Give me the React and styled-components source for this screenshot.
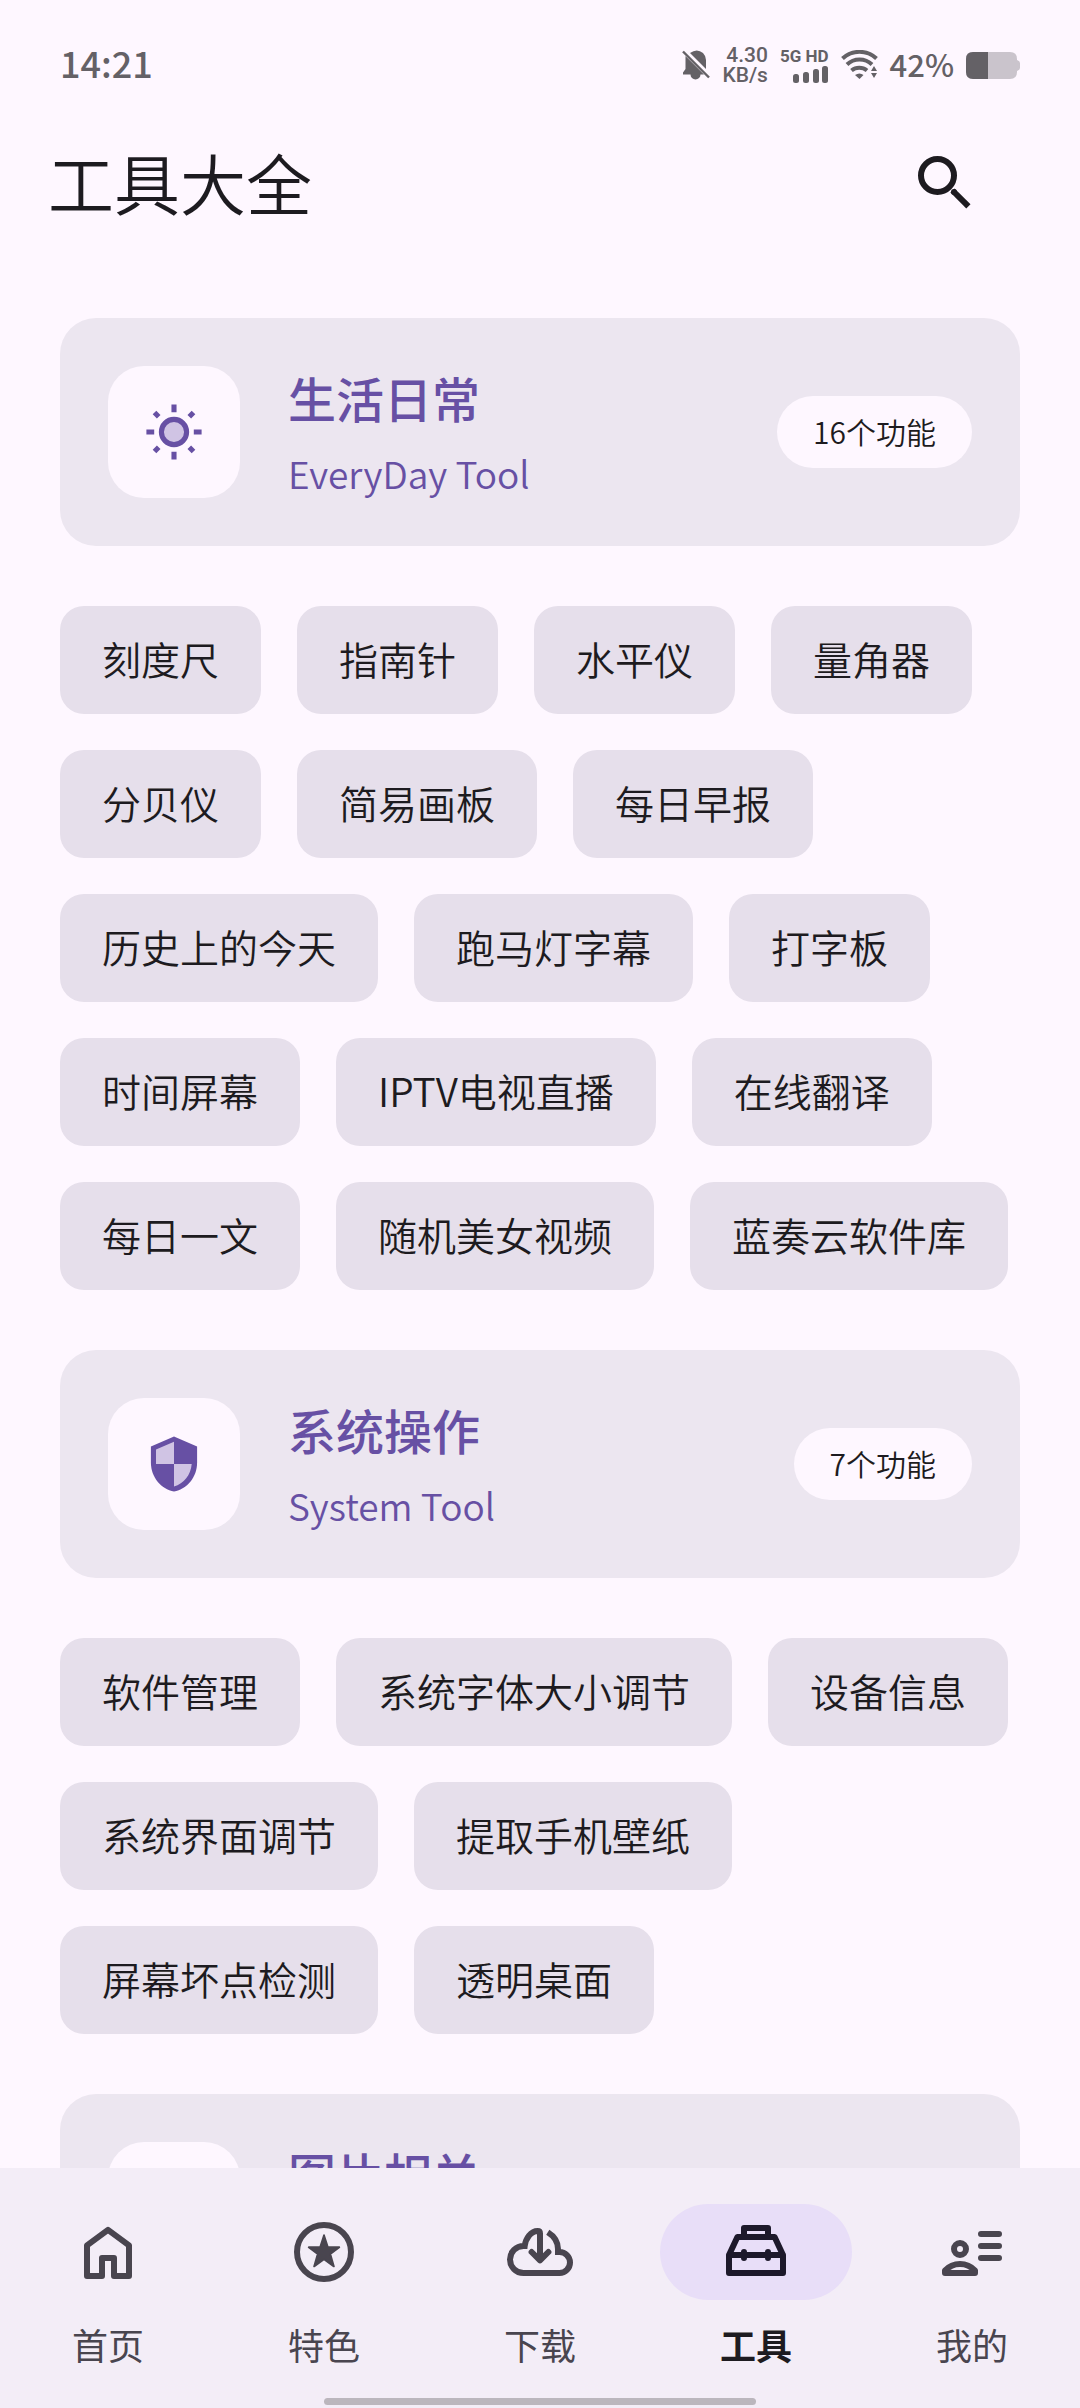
import React from 'react';
import styled, { createGlobalStyle } from 'styled-components';

const GlobalStyle = createGlobalStyle`
  * {
    box-sizing: border-box;
  }
  html, body, #root {
    height: 100%;
    margin: 0;
  }
  body {
    background: #fef7ff;
    color: #1d1b20;
    font-family: 'Noto Sans CJK SC', sans-serif;
    font-weight: 350;
  }
  button {
    border: 0;
    padding: 0;
    background: none;
    color: inherit;
    font: inherit;
  }
`;

const Screen = styled.div`
  display: flex;
  flex-direction: column;
  height: 100vh;
  overflow: hidden;
`;

const StatusBar = styled.div`
  display: flex;
  flex: none;
  align-items: center;
  height: 130px;
  padding: 0 60px;
  color: #646166;
  font-weight: 500;
  line-height: 1;
`;

const Clock = styled.time`
  flex: 1;
  padding-bottom: 6px;
  font-size: 36px;
`;

const StatusIcons = styled.div`
  display: flex;
  align-items: center;
  gap: 12px;
`;

const NetSpeed = styled.div`
  display: flex;
  flex-direction: column;
  align-items: flex-end;
  font-family: Roboto, sans-serif;
  font-size: 21px;
  line-height: 20px;
`;

const Signal = styled.div`
  display: flex;
  flex-direction: column;
  align-items: flex-end;
  gap: 2px;
  font-family: Roboto, sans-serif;
  font-size: 17px;
  font-weight: 700;
  line-height: 16px;
`;

const Percent = styled.span`
  padding-bottom: 4px;
  font-size: 31px;
`;

const AppBar = styled.header`
  display: flex;
  flex: none;
  align-items: center;
  justify-content: space-between;
  height: 106px;
  padding: 0 99px 0 48px;
`;

const PageTitle = styled.h1`
  margin: 0;
  padding-bottom: 4px;
  font-size: 66px;
  font-weight: 350;
  line-height: 96px;
`;

const SearchButton = styled.button`
  display: flex;
`;

const Content = styled.main`
  flex: 1;
  min-height: 0;
  overflow: hidden;
  padding: 82px 60px 0;
`;

const Card = styled.section`
  display: flex;
  align-items: center;
  padding: 48px;
  border-radius: 36px;
  background: #ece6f0;
`;

const IconTile = styled.div`
  display: flex;
  align-items: center;
  justify-content: center;
  width: 132px;
  height: 132px;
  border-radius: 36px;
  background: #fef7ff;
`;

const CardText = styled.div`
  display: flex;
  flex: 1;
  flex-direction: column;
  gap: 20px;
  margin-left: 48px;
  color: #6750a4;
`;

const CardTitle = styled.h2`
  margin: 0;
  font-size: 48px;
  font-weight: 500;
  line-height: 62px;
`;

const CardSubtitle = styled.p`
  margin: 0;
  font-size: 37px;
  line-height: 50px;
`;

const Badge = styled.span`
  height: 72px;
  padding: 0 36px;
  border-radius: 36px;
  background: #fef7ff;
  font-size: 30px;
  line-height: 70px;
`;

const Chips = styled.div`
  display: flex;
  flex-wrap: wrap;
  gap: 36px;
  margin: 60px 0;
`;

const Chip = styled.button`
  height: 108px;
  padding: 0 42px 5px;
  border-radius: 24px;
  background: #e6dfeb;
  font-size: 39px;
  line-height: 60px;
`;

const NavBar = styled.nav`
  flex: none;
  height: 240px;
  padding-top: 36px;
  background: #f3edf7;
`;

const Tabs = styled.div`
  display: grid;
  grid-template-columns: repeat(5, 1fr);
  height: 194px;
`;

const Tab = styled.button`
  display: flex;
  flex-direction: column;
  align-items: center;
  gap: 16px;
  color: ${({ $active }) => ($active ? '#1d1b20' : '#49454f')};
  font-size: 36px;
  font-weight: ${({ $active }) => ($active ? 700 : 400)};
  line-height: 56px;
`;

const TabIcon = styled.span`
  display: flex;
  align-items: center;
  justify-content: center;
  width: 192px;
  height: 96px;
  border-radius: 48px;
  background: ${({ $active }) => ($active ? '#e8def8' : 'transparent')};
  color: ${({ $active }) => ($active ? '#1d192b' : '#49454f')};
`;

const HomeIndicator = styled.div`
  width: 40%;
  height: 7px;
  margin: 0 auto;
  border-radius: 4px;
  background: #bbb6bd;
`;

const BellOff = () => (
  <svg width="28" height="30" viewBox="0 0 28 30" fill="currentColor">
    <path d="M3.500 6 22 24.500 H18.500 A5 5 0 0 1 8.500 24.500 H1 V22.500 L3.500 19 Z" />
    <path d="M8 3 Q15 -2 21 3 Q24 6 24 10 V19 Z" />
    <path d="M1 1.500 27 27.500" stroke="currentColor" strokeWidth="2.400" />
  </svg>
);

const SignalBars = () => (
  <svg width="36" height="17" viewBox="0 0 36 17" fill="currentColor">
    <rect x="0" y="8" width="6" height="9" rx="2.500" />
    <rect x="10" y="6" width="6" height="11" rx="2.500" />
    <rect x="20" y="3" width="6" height="14" rx="2.500" />
    <rect x="29" y="0" width="6" height="17" rx="2.500" />
  </svg>
);

const Wifi = () => (
  <svg width="37" height="30" viewBox="0 0 37 30" fill="none" stroke="currentColor" strokeWidth="4">
    <path d="M1.500 8.500 A25 25 0 0 1 35.500 8.500" />
    <path d="M6 14.500 A18 18 0 0 1 31 14.500" />
    <path d="M10.500 20.500 A12 12 0 0 1 26 20.500" />
    <path d="M14 25 Q18.500 22 22.500 25 L18.500 29 Z" fill="currentColor" stroke="none" />
    <path d="M30 21 33 16 36 21 Z M30 23 H36 L33 28 Z" fill="currentColor" stroke="#fef7ff" strokeWidth="3" paintOrder="stroke" />
  </svg>
);

const Battery = () => (
  <svg width="54" height="27" viewBox="0 0 54 27">
    <path d="M7 0 H44 Q51 0 51 7 V8 Q54 9 54 11 V16 Q54 18 51 19 V20 Q51 27 44 27 H7 Q0 27 0 20 V7 Q0 0 7 0 Z" fill="#cac4cc" />
    <path d="M22 0 H7 Q0 0 0 7 V20 Q0 27 7 27 H22 Z" fill="#646166" />
  </svg>
);

const SearchIcon = () => (
  <svg width="72" height="72" viewBox="0 0 24 24" fill="none" stroke="#1d1b20" strokeWidth="2">
    <circle cx="9.500" cy="9.500" r="5.500" />
    <path d="M14.500 14.500 19.800 19.800" />
    <circle cx="15" cy="15" r="1" fill="#1d1b20" stroke="none" />
  </svg>
);

const SunIcon = () => (
  <svg width="72" height="72" viewBox="0 0 24 24" fill="none" stroke="#6750a4" strokeWidth="1.700">
    <circle cx="12" cy="12" r="4.200" fill="#d0c4e4" />
    <path d="M12 2.800 V5.400 M12 18.600 V21.200 M2.800 12 H5.400 M18.600 12 H21.200 M5.500 5.500 6.900 6.900 M17.100 17.100 18.500 18.500 M5.500 18.500 6.900 17.100 M17.100 6.900 18.500 5.500" />
  </svg>
);

const ShieldIcon = () => (
  <svg width="72" height="72" viewBox="0 0 24 24">
    <path d="M12 2.800 19.700 6.200 V11.500 C19.700 16.500 16.300 20.300 12 21.200 C7.700 20.300 4.300 16.500 4.300 11.500 V6.200 Z" fill="#6750a4" />
    <path d="M12 4.600 V12 H6 V7.200 Z M12 12 H17.900 C17.600 15.700 15.300 18.500 12 19.500 Z" fill="#d0c4e4" />
  </svg>
);

const TabSvg = ({ children }) => (
  <svg
    width="72"
    height="72"
    viewBox="0 0 24 24"
    fill="none"
    stroke="currentColor"
    strokeWidth="2"
    strokeLinecap="round"
    strokeLinejoin="round"
  >
    {children}
  </svg>
);

const HomeIcon = () => (
  <TabSvg>
    <path d="M5 20 V9.800 L12 4.600 19 9.800 V20 H14 V14 H10 V20 Z" />
  </TabSvg>
);

const StarIcon = () => (
  <TabSvg>
    <circle cx="12" cy="12" r="9" />
    <path
      d="M12 6.400 13.300 10.400 H17.100 L14.100 12.700 15.300 16.800 12 14.400 8.700 16.800 9.900 12.700 6.900 10.400 H10.700 Z"
      fill="currentColor"
      strokeWidth=".6"
    />
  </TabSvg>
);

const CloudIcon = () => (
  <TabSvg>
    <path
      d="M14.600 5.400 Q18 7.500 18 11 V12 H18.500 A3.500 3.500 0 0 1 18.500 19 H6.500 A4.500 4.500 0 0 1 6.500 10 H6.900 C7.200 7.500 9 5 11.200 5 Q12 5 12 5.800 V15"
      strokeLinecap="butt"
      strokeLinejoin="miter"
    />
    <path d="M9.200 12 12 14.800 14.800 12" />
  </TabSvg>
);

const ToolboxIcon = () => (
  <TabSvg>
    <path d="M3 13 5.800 7 H18.200 L21 13 V19 H3 Z M3 13 H21 M8 7 V4 H16 V7 M8 12 V14 M16 12 V14" />
  </TabSvg>
);

const ProfileIcon = () => (
  <TabSvg>
    <circle cx="8" cy="11" r="2" />
    <path d="M3 19 V18.200 Q5 16 8 16 T13 18.200 V19 Z M15 6 H21 M15 10 H21 M15 14 H21" />
  </TabSvg>
);

const sections = [
  {
    title: '生活日常',
    subtitle: 'EveryDay Tool',
    icon: SunIcon,
    count: 16,
    tools: [
      '刻度尺', '指南针', '水平仪', '量角器', '分贝仪', '简易画板', '每日早报', '历史上的今天',
      '跑马灯字幕', '打字板', '时间屏幕', 'IPTV电视直播', '在线翻译', '每日一文', '随机美女视频', '蓝奏云软件库',
    ],
  },
  {
    title: '系统操作',
    subtitle: 'System Tool',
    icon: ShieldIcon,
    count: 7,
    tools: ['软件管理', '系统字体大小调节', '设备信息', '系统界面调节', '提取手机壁纸', '屏幕坏点检测', '透明桌面'],
  },
  { title: '图片相关', tools: [] },
];

const tabs = [
  { label: '首页', icon: HomeIcon },
  { label: '特色', icon: StarIcon },
  { label: '下载', icon: CloudIcon },
  { label: '工具', icon: ToolboxIcon, active: true },
  { label: '我的', icon: ProfileIcon },
];

const ToolSection = ({ title, subtitle, icon: Icon, count, tools }) => (
  <>
    <Card>
      <IconTile>{Icon && <Icon />}</IconTile>
      <CardText>
        <CardTitle>{title}</CardTitle>
        <CardSubtitle>{subtitle || '\u00a0'}</CardSubtitle>
      </CardText>
      {count && <Badge>{count}个功能</Badge>}
    </Card>
    <Chips>
      {tools.map((tool) => <Chip key={tool}>{tool}</Chip>)}
    </Chips>
  </>
);

const App = () => (
  <Screen>
    <GlobalStyle />
    <StatusBar>
      <Clock>14:21</Clock>
      <StatusIcons>
        <BellOff />
        <NetSpeed>
          <span>4.30</span>
          <span>KB/s</span>
        </NetSpeed>
        <Signal>
          <span>5G HD</span>
          <SignalBars />
        </Signal>
        <Wifi />
        <Percent>42%</Percent>
        <Battery />
      </StatusIcons>
    </StatusBar>
    <AppBar>
      <PageTitle>工具大全</PageTitle>
      <SearchButton aria-label="搜索"><SearchIcon /></SearchButton>
    </AppBar>
    <Content>
      {sections.map((section) => <ToolSection key={section.title} {...section} />)}
    </Content>
    <NavBar>
      <Tabs>
        {tabs.map(({ label, icon: Icon, active }) => (
          <Tab key={label} $active={active}>
            <TabIcon $active={active}><Icon /></TabIcon>
            {label}
          </Tab>
        ))}
      </Tabs>
      <HomeIndicator />
    </NavBar>
  </Screen>
);

export default App;
